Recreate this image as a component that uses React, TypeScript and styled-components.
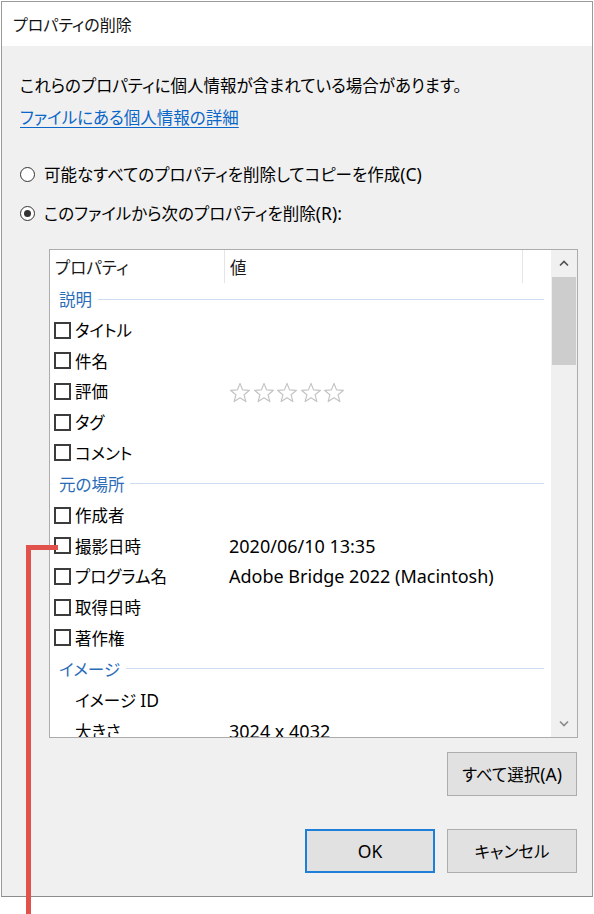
import React, { FC } from 'react';
import styled, { createGlobalStyle } from 'styled-components';

// === global ===
const GlobalStyle = createGlobalStyle`
  html, body { margin: 0; padding: 0; background: #ffffff; }
  body {
    font-family: "Noto Sans", "Noto Sans CJK JP", sans-serif;
    font-size: 16.5px;
    font-feature-settings: "palt";
    color: #000;
  }
`;

type Row =
  | { kind: 'group'; label: string }
  | { kind: 'item'; label: string; latin?: string; value?: string; stars?: boolean; check?: boolean };

const rows: Row[] = [
  { kind: 'group', label: '説明' },
  { kind: 'item', label: 'タイトル', check: true },
  { kind: 'item', label: '件名', check: true },
  { kind: 'item', label: '評価', check: true, stars: true },
  { kind: 'item', label: 'タグ', check: true },
  { kind: 'item', label: 'コメント', check: true },
  { kind: 'group', label: '元の場所' },
  { kind: 'item', label: '作成者', check: true },
  { kind: 'item', label: '撮影日時', check: true, value: '2020/06/10 13:35' },
  { kind: 'item', label: 'プログラム名', check: true, value: 'Adobe Bridge 2022 (Macintosh)' },
  { kind: 'item', label: '取得日時', check: true },
  { kind: 'item', label: '著作権', check: true },
  { kind: 'group', label: 'イメージ' },
  { kind: 'item', label: 'イメージ ', latin: 'ID' },
  { kind: 'item', label: '大きさ', value: '3024 x 4032' },
];

const Star: FC = () => (
  <svg width="22" height="21" viewBox="0 0 24 23">
    <path
      d="M12 1.5 L14.8 8.6 L22.4 9.1 L16.5 14 L18.4 21.4 L12 17.3 L5.6 21.4 L7.5 14 L1.6 9.1 L9.2 8.6 Z"
      fill="none" stroke="#c4c4c4" strokeWidth="1.3" strokeLinejoin="round" />
  </svg>
);

const Chevron: FC<{ down?: boolean }> = ({ down }) => (
  <svg width="10" height="7" viewBox="0 0 10 7">
    <path d={down ? 'M1 1.5 L5 5.5 L9 1.5' : 'M1 5.5 L5 1.5 L9 5.5'}
      fill="none" stroke={down ? '#8a8a8a' : '#505050'} strokeWidth="1.6" />
  </svg>
);

const App: FC = () => (
  <>
    <GlobalStyle />
    <Page>
      <Window>
        <TitleBar>プロパティの削除</TitleBar>
        <Body>
          <Intro>これらのプロパティに個人情報が含まれている場合があります。</Intro>
          <InfoLink href="#">ファイルにある個人情報の詳細</InfoLink>
          <RadioGroup>
            <RadioRow>
              <Radio $checked={false} />
              <span>可能なすべてのプロパティを削除してコピーを作成<Latin>(C)</Latin></span>
            </RadioRow>
            <RadioRow>
              <Radio $checked={true} />
              <span>このファイルから次のプロパティを削除<Latin>(R):</Latin></span>
            </RadioRow>
          </RadioGroup>

          <ListBox>
            <ListContent>
              <HeaderRow>
                <HeaderCell $w={175}>プロパティ</HeaderCell>
                <HeaderCell $w={298}>値</HeaderCell>
              </HeaderRow>
              {rows.map((r, i) =>
                r.kind === 'group' ? (
                  <GroupRow key={i}>
                    <GroupLabel>{r.label}</GroupLabel>
                    <GroupLine />
                  </GroupRow>
                ) : (
                  <ItemRow key={i}>
                    <NameCell>
                      {r.check ? <CheckBox /> : <CheckSpacer />}
                      <span>{r.label}{r.latin && <Latin>{r.latin}</Latin>}</span>
                    </NameCell>
                    <ValueCell>
                      {r.stars ? (
                        <Stars>{[0, 1, 2, 3, 4].map((s) => <Star key={s} />)}</Stars>
                      ) : r.value}
                    </ValueCell>
                  </ItemRow>
                )
              )}
            </ListContent>
            <ScrollBar>
              <ScrollArrow><Chevron /></ScrollArrow>
              <ScrollTrack><Thumb /></ScrollTrack>
              <ScrollArrow><Chevron down /></ScrollArrow>
            </ScrollBar>
          </ListBox>

          <SelectRow>
            <Button>すべて選択<Latin>(A)</Latin></Button>
          </SelectRow>
          <Footer>
            <Button $primary><Latin>OK</Latin></Button>
            <Button>キャンセル</Button>
          </Footer>
        </Body>
      </Window>
      <Callout>
        <CalloutStem />
        <CalloutArm />
      </Callout>
    </Page>
  </>
);

// === style ===
const Page = styled.div`
  position: relative;
  width: 594px;
  height: 914px;
  overflow: hidden;
  padding: 1px 0 0 1px;
  box-sizing: border-box;
`;

const Window = styled.div`
  width: 592px;
  height: 896px;
  box-sizing: border-box;
  border: 1px solid #9a9a9a;
  border-bottom-color: #8c8c8c;
  background: #f0f0f0;
  display: flex;
  flex-direction: column;
`;

const TitleBar = styled.div`
  height: 44px;
  flex: none;
  background: #ffffff;
  display: flex;
  align-items: center;
  padding-left: 11px;
  font-size: 16px;
  color: #111;
`;

const Latin = styled.span`
  font-size: 17.5px;
`;

const Body = styled.div`
  flex: 1;
  display: flex;
  flex-direction: column;
  padding: 0 0 0 18px;
`;

const Intro = styled.div`
  margin-top: 28px;
  line-height: 24px;
`;

const InfoLink = styled.a`
  margin-top: 8px;
  align-self: flex-start;
  line-height: 24px;
  color: #0a66c8;
  text-decoration: underline;
  text-underline-offset: 3px;
`;

const RadioGroup = styled.div`
  margin-top: 32px;
  display: flex;
  flex-direction: column;
  gap: 15px;
`;

const RadioRow = styled.label`
  display: flex;
  align-items: center;
  gap: 9px;
  height: 24px;
  line-height: 24px;
`;

const Radio = styled.span<{ $checked: boolean }>`
  width: 13px;
  height: 13px;
  border-radius: 50%;
  border: 1.5px solid #333;
  background: #fff;
  flex: none;
  display: flex;
  align-items: center;
  justify-content: center;
  &::after {
    content: '';
    width: 7px;
    height: 7px;
    border-radius: 50%;
    background: #333;
    display: ${(p) => (p.$checked ? 'block' : 'none')};
  }
`;

const ListBox = styled.div`
  margin: 24px 0 0 29px;
  width: 529px;
  height: 489px;
  box-sizing: border-box;
  border: 1px solid #acacac;
  background: #fff;
  display: flex;
  overflow: hidden;
`;

const ListContent = styled.div`
  flex: 1;
  overflow: hidden;
  padding-right: 7px;
`;

const HeaderRow = styled.div`
  height: 33px;
  display: flex;
  align-items: center;
`;

const HeaderCell = styled.div<{ $w: number }>`
  width: ${(p) => p.$w}px;
  height: 100%;
  box-sizing: border-box;
  padding-left: 5px;
  display: flex;
  align-items: center;
  border-right: 1px solid #e5e5e5;
  color: #1a1a1a;
`;

const GroupRow = styled.div`
  height: 32px;
  display: flex;
  align-items: center;
  padding-left: 9px;
  gap: 6px;
`;

const GroupLabel = styled.span`
  color: #2b6cb8;
`;

const GroupLine = styled.span`
  flex: 1;
  height: 1px;
  background: #cddcef;
`;

const ItemRow = styled.div`
  height: 30.6px;
  display: flex;
  align-items: center;
  white-space: nowrap;
`;

const NameCell = styled.div`
  width: 179px;
  flex: none;
  display: flex;
  align-items: center;
  padding-left: 4px;
  box-sizing: border-box;
  gap: 4px;
`;

const CheckBox = styled.span`
  width: 17px;
  height: 17px;
  box-sizing: border-box;
  border: 2px solid #3c3c3c;
  flex: none;
`;

const CheckSpacer = styled.span`
  width: 17px;
  flex: none;
`;

const ValueCell = styled.div`
  flex: 1;
  white-space: nowrap;
  font-size: 18px;
`;

const Stars = styled.div`
  display: flex;
  gap: 1.5px;
  margin-top: 2px;
`;

const ScrollBar = styled.div`
  width: 26px;
  flex: none;
  background: #f0f0f0;
  display: flex;
  flex-direction: column;
`;

const ScrollArrow = styled.div`
  height: 27px;
  display: flex;
  align-items: center;
  justify-content: center;
`;

const ScrollTrack = styled.div`
  flex: 1;
  padding: 0 1px;
`;

const Thumb = styled.div`
  height: 88px;
  background: #cdcdcd;
`;

const SelectRow = styled.div`
  display: flex;
  justify-content: flex-end;
  margin-top: 14px;
  padding-right: 15px;
`;

const Footer = styled.div`
  display: flex;
  justify-content: flex-end;
  gap: 12px;
  margin-top: 33px;
  padding-right: 15px;
`;

const Button = styled.button<{ $primary?: boolean }>`
  width: 130px;
  height: 44px;
  box-sizing: border-box;
  background: #e1e1e1;
  border: ${(p) => (p.$primary ? '2px solid #1f7fd8' : '1px solid #adadad')};
  font-family: inherit;
  font-size: 16.5px;
  font-feature-settings: "palt";
  color: #000;
  padding: 0;
`;

// annotation line laid over the dialog
const Callout = styled.div`
  position: absolute;
  left: 26px;
  top: 545px;
  width: 32px;
  height: 369px;
`;

const CalloutStem = styled.div`
  position: absolute;
  left: 0;
  top: 0;
  width: 5px;
  height: 100%;
  background: #e2524c;
`;

const CalloutArm = styled.div`
  position: absolute;
  left: 0;
  top: 0;
  width: 32px;
  height: 5px;
  background: #e2524c;
`;

export default App;
